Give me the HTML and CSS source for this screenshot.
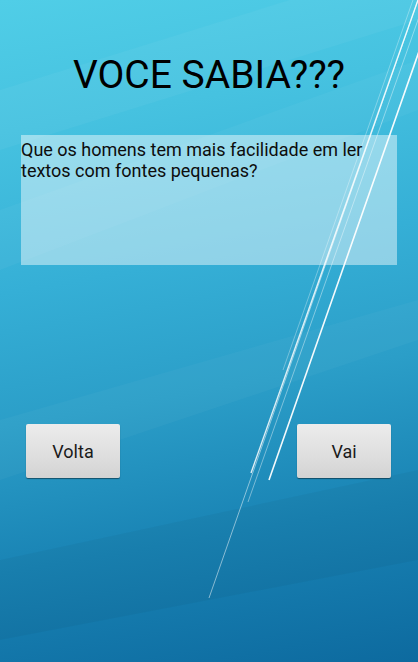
FILE: index.html
```html
<!DOCTYPE html>
<html lang="pt">
<head>
<meta charset="utf-8">
<title>Voce sabia</title>
<link rel="stylesheet" href="styles.css">
</head>
<body>
<div class="screen">
  <svg class="backdrop" width="418" height="662" viewBox="0 0 418 662" aria-hidden="true">
    <polygon points="0,90 418,-40 418,20 0,150" fill="#ffffff" opacity="0.04"/>
    <polygon points="0,210 418,60 418,110 0,270" fill="#ffffff" opacity="0.035"/>
    <polygon points="0,420 418,300 418,340 0,480" fill="#ffffff" opacity="0.03"/>
    <polygon points="0,560 418,470 418,560 0,640" fill="#000000" opacity="0.035"/>
    <line x1="437" y1="0" x2="269" y2="480" stroke="#fff" stroke-width="1.6" opacity="0.95"/>
    <line x1="418" y1="0" x2="251" y2="473" stroke="#fff" stroke-width="1.4" opacity="0.85"/>
    <line x1="418" y1="0" x2="209" y2="598" stroke="#fff" stroke-width="0.9" opacity="0.55"/>
    <line x1="425" y1="0" x2="248" y2="502" stroke="#fff" stroke-width="0.8" opacity="0.5"/>
    <line x1="413" y1="0" x2="283" y2="370" stroke="#fff" stroke-width="0.8" opacity="0.4"/>
  </svg>
  <main class="content">
    <h1 class="title">VOCE SABIA???</h1>
    <div class="fact">Que os homens tem mais facilidade em ler textos com fontes pequenas?</div>
    <div class="actions">
      <button class="btn" type="button">Volta</button>
      <button class="btn" type="button">Vai</button>
    </div>
  </main>
</div>
</body>
</html>
```

FILE: styles.css
```css
html, body {
  margin: 0;
  padding: 0;
}
body {
  font-family: Roboto, "Noto Sans", sans-serif;
  background: #1f8fc0;
}
.screen {
  position: relative;
  width: 418px;
  height: 662px;
  overflow: hidden;
  background: linear-gradient(170deg, #50cee7 0%, #46c2e0 18%, #35afd6 40%, #2b9ec8 58%, #1983b4 78%, #0d6a9f 100%);
}
.backdrop {
  position: absolute;
  left: 0;
  top: 0;
  z-index: 0;
}
.content {
  position: relative;
  z-index: 1;
  display: flex;
  flex-direction: column;
}
.title {
  margin: 0;
  padding-top: 52px;
  font-size: 39px;
  line-height: 47px;
  font-weight: 400;
  color: #000;
  text-align: center;
}
.fact {
  margin: 36px 21px 0 21px;
  height: 126px;
  padding-top: 4px;
  background: rgba(255, 255, 255, 0.45);
  font-size: 18px;
  line-height: 21px;
  color: #0d0d0d;
}
.actions {
  margin-top: 159px;
  display: flex;
  justify-content: space-between;
  padding: 0 27px 0 26px;
}
.btn {
  width: 94px;
  height: 54px;
  border: none;
  border-radius: 2px;
  background: linear-gradient(180deg, #ececec 0%, #dedede 60%, #d3d3d3 100%);
  box-shadow: 0 1px 1px rgba(0, 0, 0, 0.45);
  font-family: Roboto, "Noto Sans", sans-serif;
  font-size: 18px;
  color: #1a1a1a;
  padding: 0;
}
```
